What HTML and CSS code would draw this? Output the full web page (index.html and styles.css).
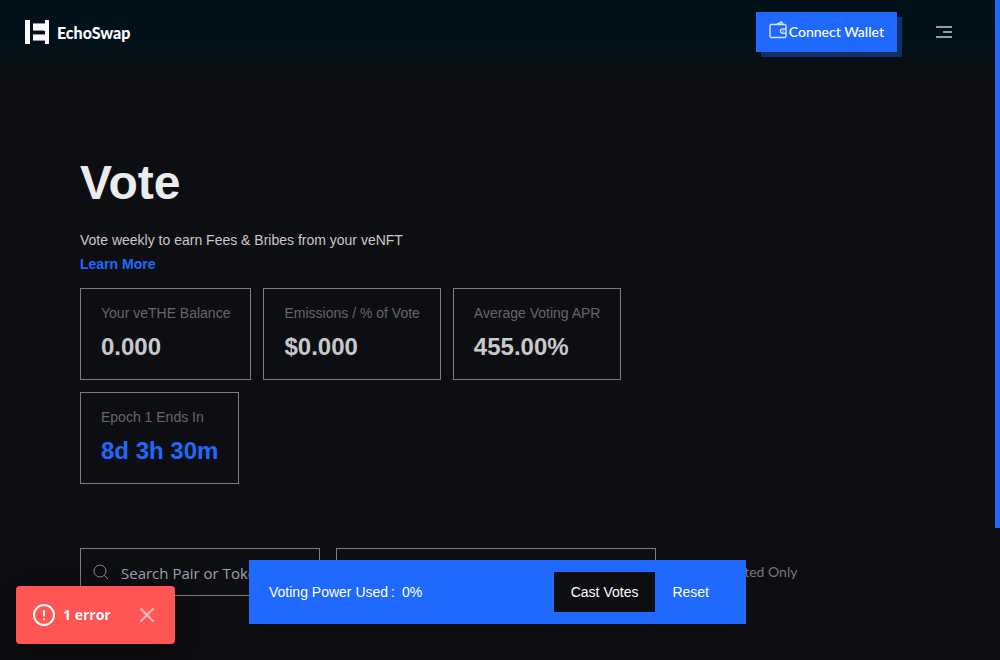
FILE: index.html
```html
<!DOCTYPE html>
<html lang="en">
<head>
<meta charset="utf-8">
<meta name="viewport" content="width=device-width, initial-scale=1">
<title>EchoSwap - Vote</title>
<link rel="stylesheet" href="styles.css">
</head>
<body>
<header class="header">
  <a class="brand" href="#">
    <svg class="brand-mark" viewBox="0 0 24 24" aria-hidden="true">
      <path fill="#fff" d="M0 0h5v24H0zM8 4h12V0h4v24h-4v-4H8v-5h12v-4H8z"/>
      <path fill="#8d9499" d="M8 3h12v1H8zM8 10h11v1H8zM8 14h12v1H8zM8 20h12v1H8z"/>
    </svg>
    <span class="brand-name">EchoSwap</span>
  </a>
  <div class="header-actions">
    <button class="connect" type="button">
      <svg class="connect-icon" viewBox="0 0 18 18" fill="none" stroke="#d5e3ff" stroke-width="1.4" stroke-linejoin="round" aria-hidden="true">
        <path d="M2 3.500H16L17 4.500V15.500L16 16.500H2L1 15.500V4.500ZM7.500 3.300L12.500 1L14 3.300M17 8H13L11.500 9V11L13 12.200H17M13.500 10H14.500"/>
      </svg>
      Connect Wallet
    </button>
    <button class="menu" type="button" aria-label="Menu">
      <svg class="menu-icon" viewBox="0 0 16 12" fill="#999da0" aria-hidden="true">
        <path d="M0 0h16v2H0zM7 5h9v2H7zM0 10h16v2H0z"/>
      </svg>
    </button>
  </div>
</header>

<main class="page">
  <h1 class="title">Vote</h1>
  <p class="intro">Vote weekly to earn Fees &amp; Bribes from your veNFT</p>
  <a class="learn" href="#">Learn More</a>

  <dl class="stats">
    <div class="stat"><dt class="stat-label">Your veTHE Balance</dt><dd class="stat-value">0.000</dd></div>
    <div class="stat"><dt class="stat-label">Emissions / % of Vote</dt><dd class="stat-value">$0.000</dd></div>
    <div class="stat"><dt class="stat-label">Average Voting APR</dt><dd class="stat-value">455.00%</dd></div>
    <div class="stat"><dt class="stat-label">Epoch 1 Ends In</dt><dd class="stat-value stat-value-accent">8d 3h 30m</dd></div>
  </dl>

  <div class="filters">
    <label class="search">
      <svg class="search-icon" viewBox="0 0 16 16" fill="none" stroke="#8c8d8f" aria-hidden="true">
        <circle cx="7" cy="7" r="6"/><path d="M11.300 11.300L15 15"/>
      </svg>
      <input class="search-input" type="text" placeholder="Search Pair or Token" aria-label="Search Pair or Token">
    </label>
    <select class="lock" aria-label="veNFT"><option></option></select>
    <label class="voted"><input class="switch" type="checkbox">Voted Only</label>
  </div>
</main>

<section class="vote-bar" aria-label="Votes">
  <p class="power">Voting Power Used<span class="colon">:</span>0%</p>
  <div class="vote-actions">
    <button class="cast" type="button">Cast Votes</button>
    <button class="reset" type="button">Reset</button>
  </div>
</section>

<div class="toast" role="alert">
  <svg class="toast-icon" viewBox="0 0 22 22" fill="none" stroke="#fff" stroke-width="2" stroke-linecap="round" aria-hidden="true">
    <circle cx="11" cy="11" r="10"/><path d="M11 7v4.500M11 15.200v.1"/>
  </svg>
  <span class="toast-text">1 error</span>
  <button class="toast-close" type="button" aria-label="Close">
    <svg class="close-icon" viewBox="0 0 16 16" fill="none" stroke="#ffc0c0" stroke-width="2" stroke-linecap="round" aria-hidden="true">
      <path d="M2 2l12 12M14 2L2 14"/>
    </svg>
  </button>
</div>

<div class="scroll-thumb"></div>
</body>
</html>
```
FILE: styles.css
```css
* {
  box-sizing: border-box;
}

body {
  margin: 0;
  padding-right: 5px;
  background: #0d0e11;
  color: #c8c9cb;
  font: 14px/24px "Liberation Sans", Arial, sans-serif;
}

html {
  background: #0d0e11;
  overflow: hidden;
}

button {
  border: 0;
  padding: 0;
  background: none;
  color: #fff;
  font: inherit;
  cursor: pointer;
}

svg {
  display: block;
  flex: none;
}

.header {
  display: flex;
  align-items: center;
  justify-content: space-between;
  padding: 12px 43px 36px 25px;
  margin-right: -5px;
  background: linear-gradient(#01111a 0, #01111a 40px, #0d0e11 82px);
}

.brand {
  display: flex;
  align-items: center;
  gap: 8px;
  color: #fff;
  text-decoration: none;
}

.brand-mark {
  width: 24px;
  height: 24px;
}

.brand-name {
  padding-top: 2px;
  font: 900 16px/24px Lato, sans-serif;
}

.header-actions {
  display: flex;
  align-items: center;
  gap: 34px;
}

.connect {
  display: flex;
  align-items: center;
  gap: 2px;
  height: 40px;
  padding: 0 13px;
  background: #1f69ff;
  box-shadow: 5px 5px #142e66;
  font: 500 14px/20px Lato, sans-serif;
}

.connect-icon {
  width: 18px;
  height: 18px;
  margin-bottom: 4px;
}

.menu {
  padding: 5px;
}

.menu-icon {
  width: 16px;
  height: 12px;
}

.page {
  padding: 64px 80px;
}

.title {
  margin: 0 0 14px;
  color: #ebecef;
  font-size: 48px;
  line-height: 62px;
}

.intro {
  margin: 0;
}

.learn {
  display: inline-block;
  color: #1f69ff;
  font-weight: bold;
  text-decoration: none;
}

.stats {
  display: flex;
  flex-wrap: wrap;
  gap: 12px;
  width: 75%;
  margin: 12px 0 64px;
}

.stat {
  padding: 12px 20px 16px;
  border: 1px solid #7c7d7f;
}

.stat-label {
  color: #66676a;
}

.stat-value {
  margin: 6px 0 0;
  font-size: 24px;
  font-weight: bold;
  line-height: 32px;
}

.stat-value-accent {
  color: #1f69ff;
}

.filters {
  display: flex;
  align-items: center;
  gap: 16px;
}

.search {
  display: flex;
  align-items: center;
  gap: 12px;
  width: 240px;
  height: 48px;
  padding: 0 12px;
  border: 1px solid #7c7d7f;
}

.search-icon {
  width: 16px;
  height: 16px;
}

.search-input {
  flex: 1;
  min-width: 0;
  padding: 2px 0 0;
  border: 0;
  outline: 0;
  background: none;
  color: #c8c9cb;
  font: 15px/24px "Open Sans", "Noto Sans", sans-serif;
}

.search-input::placeholder {
  color: #9ca3af;
}

.lock {
  appearance: none;
  width: 320px;
  height: 48px;
  padding: 0 12px;
  border: 1px solid #7c7d7f;
  border-radius: 0;
  background: #0d0e11;
  color: #c8c9cb;
}

.voted {
  display: flex;
  align-items: center;
  gap: 8px;
  color: #77787a;
  font: 14px/24px Lato, sans-serif;
}

.switch {
  appearance: none;
  width: 48px;
  height: 20px;
  margin: 0;
  border: 1px solid #7c7d7f;
}

.vote-bar {
  position: fixed;
  right: 5px;
  bottom: 36px;
  left: 0;
  display: flex;
  align-items: center;
  justify-content: space-between;
  width: calc(50% - 3px);
  margin: 0 auto;
  padding: 12px 20px;
  background: #1f69ff;
  color: #fff;
}

.power {
  margin: 0;
}

.colon {
  margin: 0 7px 0 3px;
}

.vote-actions {
  display: flex;
}

.cast,
.reset {
  height: 40px;
  padding: 0 17px;
}

.cast {
  background: #0d0e11;
}

.toast {
  position: fixed;
  bottom: 16px;
  left: 16px;
  display: flex;
  align-items: center;
  padding: 17px 20px 17px 17px;
  border-radius: 4px;
  background: #ff5555;
  box-shadow: 0 8px 24px rgba(0, 0, 0, 0.4);
  color: #fff;
}

.toast-icon {
  width: 22px;
  height: 22px;
}

.toast-text {
  margin: 0 28px 0 8px;
  font: bold 14px/24px "Open Sans", "Noto Sans", sans-serif;
}

.close-icon {
  width: 16px;
  height: 16px;
}

.scroll-thumb {
  position: fixed;
  top: 0;
  right: 0;
  width: 5px;
  height: 80%;
  background: #1f69ff;
}
```
